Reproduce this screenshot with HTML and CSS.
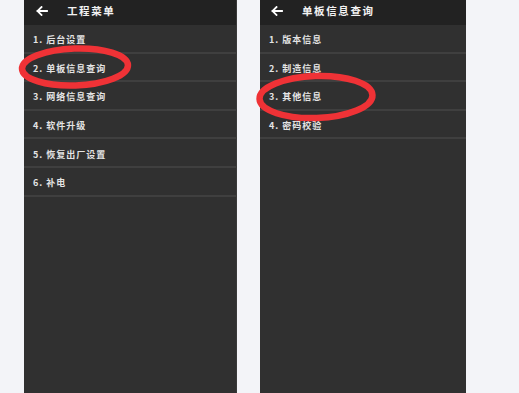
FILE: index.html
```html
<!DOCTYPE html>
<html lang="zh">
<head>
<meta charset="utf-8">
<link rel="stylesheet" href="styles.css">
</head>
<body>
<div class="stage">
  <section class="phone phone-left">
    <header class="bar">
      <svg class="back" viewBox="0 0 12 10" width="12" height="10"><path d="M11 5H1.5M5.5 1L1.5 5L5.5 9" fill="none" stroke="#fff" stroke-width="1.8" stroke-linecap="square"/></svg>
      <span class="title">工程菜单</span>
    </header>
    <ul class="menu">
      <li>1. 后台设置</li>
      <li>2. 单板信息查询</li>
      <li>3. 网络信息查询</li>
      <li>4. 软件升级</li>
      <li>5. 恢复出厂设置</li>
      <li>6. 补电</li>
    </ul>
  </section>
  <section class="phone phone-right">
    <header class="bar">
      <svg class="back" viewBox="0 0 12 10" width="12" height="10"><path d="M11 5H1.5M5.5 1L1.5 5L5.5 9" fill="none" stroke="#fff" stroke-width="1.8" stroke-linecap="square"/></svg>
      <span class="title">单板信息查询</span>
    </header>
    <ul class="menu">
      <li>1. 版本信息</li>
      <li>2. 制造信息</li>
      <li>3. 其他信息</li>
      <li>4. 密码校验</li>
    </ul>
  </section>
  <svg class="ring ring-left" viewBox="0 0 120 48" width="120" height="48"><ellipse cx="59" cy="24" rx="53" ry="18.5" transform="rotate(-2 59 24)" fill="none" stroke="#ef3236" stroke-width="6.5"/></svg>
  <svg class="ring ring-right" viewBox="0 0 126 54" width="126" height="54"><ellipse cx="62" cy="27" rx="56.5" ry="21" transform="rotate(-2 62 27)" fill="none" stroke="#ef3236" stroke-width="6.5"/></svg>
</div>
</body>
</html>
```
FILE: styles.css
```css
html, body {
  margin: 0;
  padding: 0;
  background: #f3f4f8;
  height: 100%;
  overflow: hidden;
}
.stage {
  position: relative;
  display: flex;
  gap: 23px;
  padding-left: 24px;
  height: 393px;
  font-family: "Noto Sans CJK SC", "Noto Sans", sans-serif;
}
.phone {
  background: #303030;
  height: 100%;
  display: flex;
  flex-direction: column;
}
.phone-left { width: 213px; border-right: 1px solid #3a3a3a; box-sizing: border-box; }
.phone-right { width: 206px; }
.bar {
  height: 25px;
  background: #222222;
  display: flex;
  align-items: center;
  box-sizing: border-box;
  padding-bottom: 3px;
}
.phone-left .bar { padding-left: 12px; }
.phone-right .bar { padding-left: 11px; }
.back { flex: none; display: block; }
.title {
  color: #f2f2f2;
  font-size: 10.5px;
  font-weight: 700;
  letter-spacing: 1.6px;
  margin-left: 19px;
  line-height: 1;
}
.menu {
  list-style: none;
  margin: 0;
  padding: 0;
}
.menu li {
  height: 28.6px;
  box-sizing: border-box;
  border-bottom: 2px solid #3f3f3f;
  display: flex;
  align-items: center;
  padding-left: 9px;
  padding-top: 3px;
  color: #e4e4e4;
  font-size: 9px;
  font-weight: 700;
  letter-spacing: 1px;
  white-space: pre;
}
.ring {
  position: absolute;
  display: block;
}
.ring-left { left: 16px; top: 43px; }
.ring-right { left: 254px; top: 70px; }
```
